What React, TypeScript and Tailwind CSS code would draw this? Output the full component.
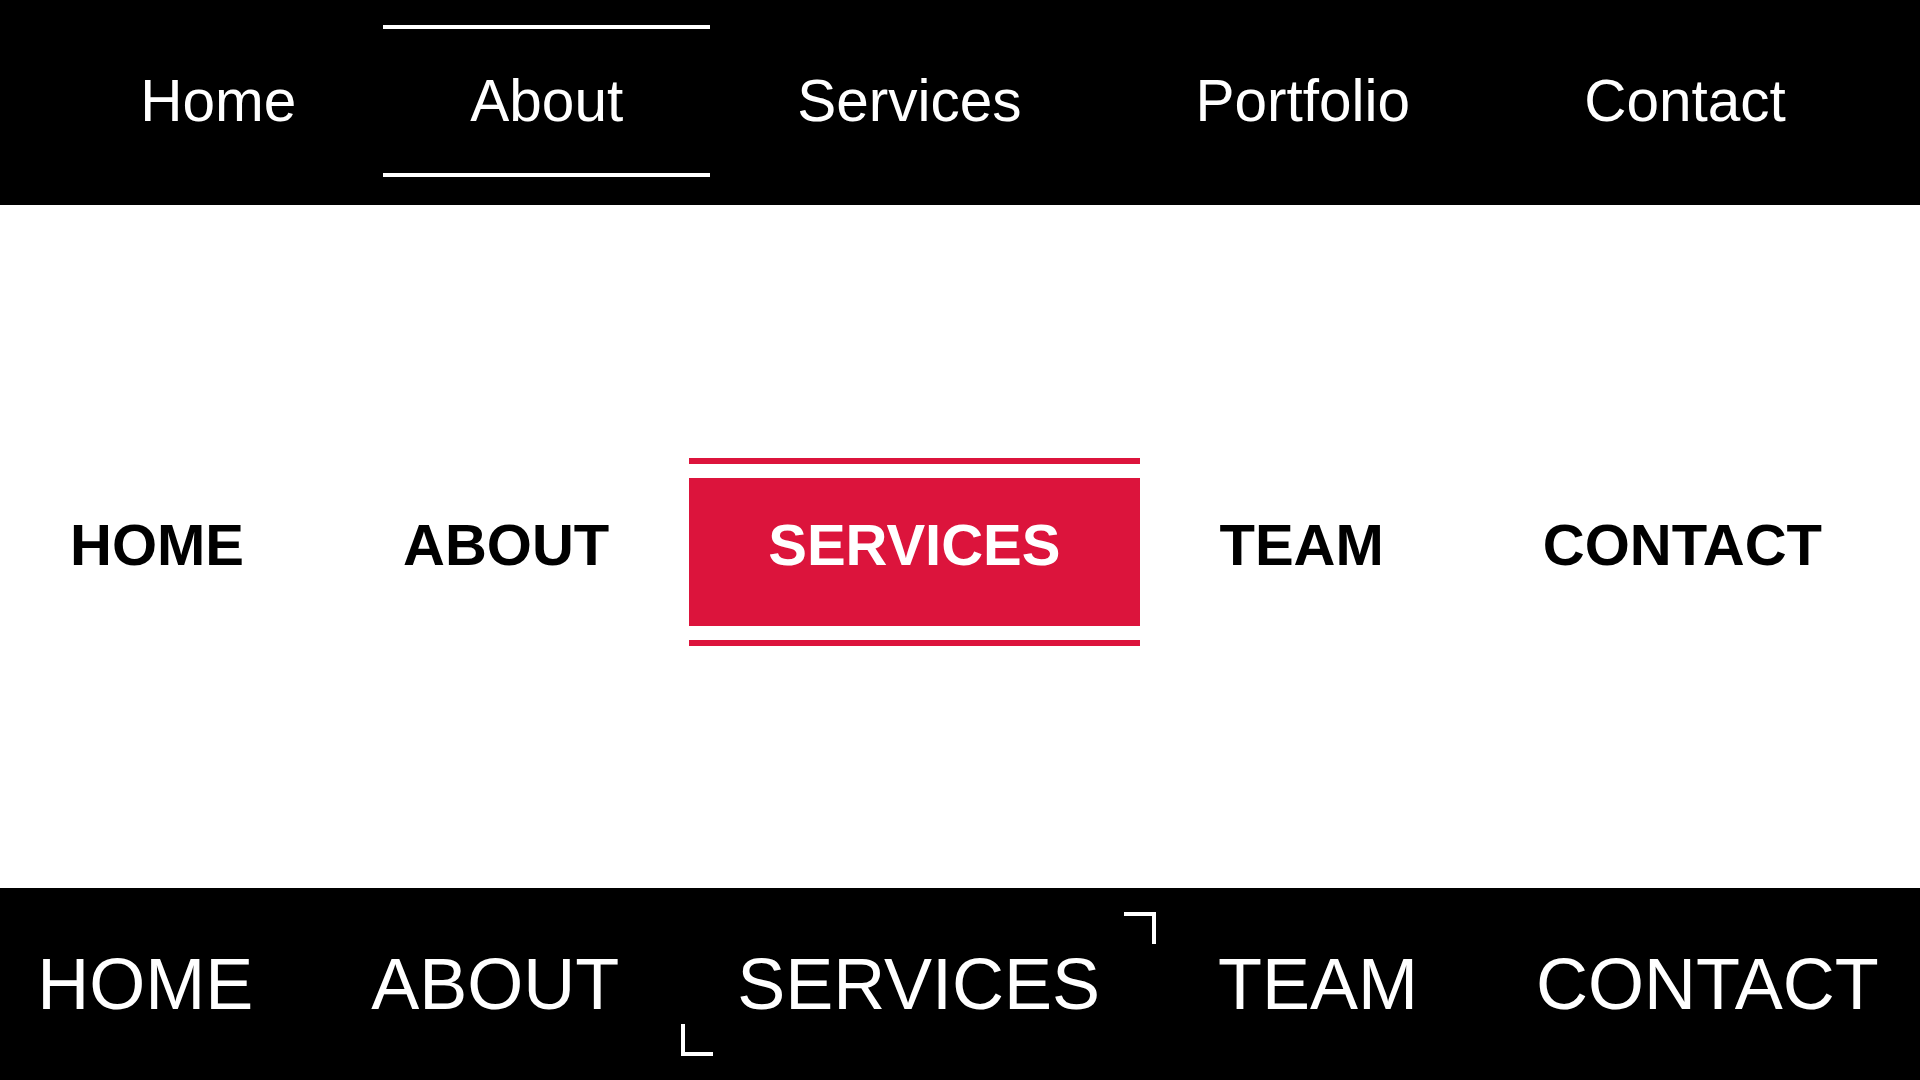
const topLinks = ['Home', 'About', 'Services', 'Portfolio', 'Contact'];
const midLinks = ['HOME', 'ABOUT', 'SERVICES', 'TEAM', 'CONTACT'];

function TopNav() {
  return (
    <nav className="bg-black h-[205px] pt-[25px] pl-[6px]">
      <ul className="flex justify-center">
        {topLinks.map((link) => (
          <li key={link}>
            <a
              href="#"
              className={`flex h-[152px] items-center px-[87px] text-[58.5px] text-white border-y-4 ${
                link === 'About' ? 'border-white' : 'border-transparent'
              }`}
            >
              {link}
            </a>
          </li>
        ))}
      </ul>
    </nav>
  );
}

function BoxedNav() {
  return (
    <section className="bg-white h-[683px] pt-[253px] pr-[28px]">
      <ul className="flex justify-center">
        {midLinks.map((link) => {
          const active = link === 'SERVICES';
          return (
            <li key={link} className="flex flex-col gap-[14px] shrink-0">
              <span className={`block h-[6px] ${active ? 'bg-[#dc143c]' : ''}`} />
              <a
                href="#"
                className={`block h-[148px] px-[79.5px] pt-[38px] text-[58px] font-bold leading-none ${
                  active ? 'bg-[#dc143c] text-white' : 'text-black'
                }`}
              >
                {link}
              </a>
              <span className={`block h-[6px] ${active ? 'bg-[#dc143c]' : ''}`} />
            </li>
          );
        })}
      </ul>
    </section>
  );
}

function CornerNav() {
  return (
    <nav className="bg-black h-[192px] flex items-center justify-center overflow-hidden">
      <ul className="flex gap-[6px] shrink-0 pr-[4px]">
        {midLinks.map((link) => {
          const active = link === 'SERVICES';
          return (
            <li key={link} className="relative shrink-0">
              <a href="#" className="flex h-[144px] items-center px-[56px] text-[72px] text-white">
                {link}
              </a>
              {active && (
                <>
                  <span className="absolute top-0 right-0 w-8 h-8 border-t-4 border-r-4 border-white" />
                  <span className="absolute bottom-0 left-0 w-8 h-8 border-b-4 border-l-4 border-white" />
                </>
              )}
            </li>
          );
        })}
      </ul>
    </nav>
  );
}

export default function App() {
  return (
    <div className="w-[1920px] h-[1080px] overflow-hidden font-['Liberation_Sans',Arial,sans-serif]">
      <TopNav />
      <BoxedNav />
      <CornerNav />
    </div>
  );
}
